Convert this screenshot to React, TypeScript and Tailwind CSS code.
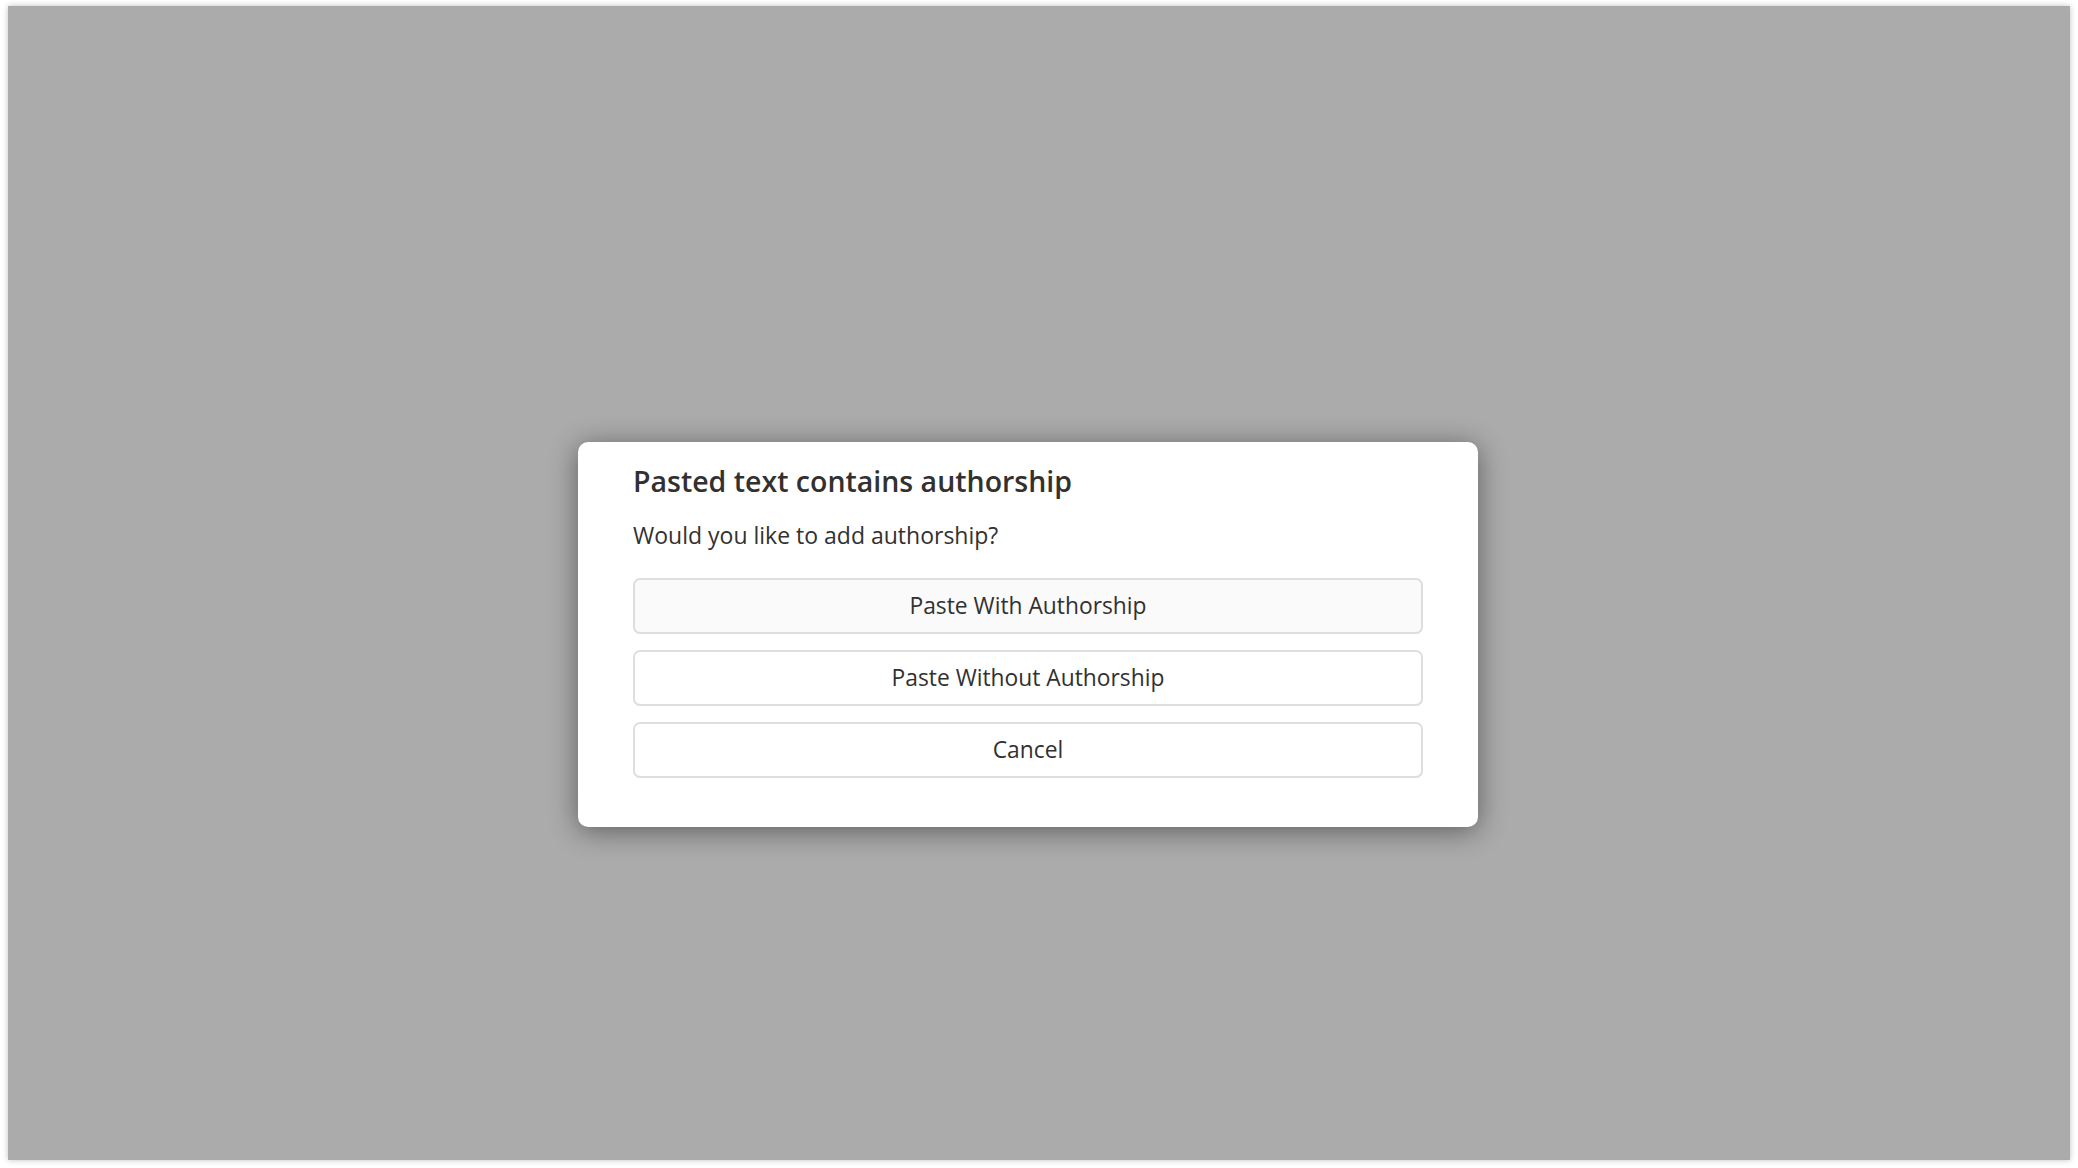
import React from 'react';

const options = ['Paste With Authorship', 'Paste Without Authorship', 'Cancel'];

const App: React.FC = () => {
  return (
    <div className="w-[2078px] h-[1168px] bg-white pl-[8px] pt-[6px] overflow-hidden" style={{ fontFamily: '"Open Sans", "Noto Sans", sans-serif' }}>
      <div className="w-[2062px] h-[1154px] bg-[#ababab] shadow-[0_0_6px_rgba(0,0,0,0.25)] pl-[570px] pt-[436px]">
        {/* Dialog */}
        <div className="w-[900px] h-[385px] bg-white rounded-[10px] shadow-[0_4px_28px_rgba(0,0,0,0.45)] px-[55px] pt-[19px] text-[#323130]">
          <h1 className="text-[28.5px] leading-[40px] font-semibold">Pasted text contains authorship</h1>
          <p className="mt-[19px] text-[23px] leading-[30px]">Would you like to add authorship?</p>
          <div className="mt-[28px] flex flex-col gap-[16px]">
            {options.map((label, i) => (
              <button
                key={label}
                className={`h-[56px] w-full rounded-[7px] border-2 border-[#dedede] text-[22.8px] text-[#323130] ${i === 0 ? 'bg-[#fafafa]' : 'bg-white'}`}
              >
                {label}
              </button>
            ))}
          </div>
        </div>
      </div>
    </div>
  );
};

export default App;
